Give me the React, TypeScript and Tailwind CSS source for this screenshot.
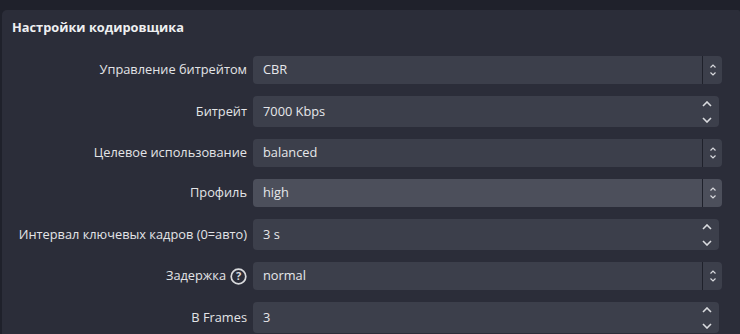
import React from "react";

const font = { fontFamily: '"Open Sans", "Noto Sans", sans-serif' };

function ComboArrows() {
  return (
    <svg width="8" height="14" viewBox="0 0 8 14" fill="none" stroke="#d8d9dd" strokeWidth="1.2">
      <path d="M1.5 4.5 L4 2 L6.5 4.5" />
      <path d="M1.5 9.5 L4 12 L6.5 9.5" />
    </svg>
  );
}

function SpinArrows() {
  return (
    <div className="flex flex-col items-center justify-between h-[22px]">
      <svg width="10" height="6" viewBox="0 0 10 6" fill="none" stroke="#dadbdf" strokeWidth="1.6">
        <path d="M1 5 L5 1 L9 5" />
      </svg>
      <svg width="10" height="6" viewBox="0 0 10 6" fill="none" stroke="#dadbdf" strokeWidth="1.6">
        <path d="M1 1 L5 5 L9 1" />
      </svg>
    </div>
  );
}

function Combo({ value, highlight }: { value: string; highlight?: boolean }) {
  return (
    <div
      className={`flex h-[28px] flex-1 rounded-[4px] ${highlight ? "bg-[#4c4f5b]" : "bg-[#3c3f4b]"}`}
    >
      <div className="flex flex-1 items-center pl-[10px] text-[12.8px] text-[#e6e7ea]">{value}</div>
      <div className="w-px bg-[#1f212b]" />
      <div className="flex w-[19px] items-center justify-center">
        <ComboArrows />
      </div>
    </div>
  );
}

function Spin({ value }: { value: string }) {
  return (
    <div className="mr-[3px] flex h-[31px] flex-1 rounded-[4px] bg-[#3c3f4b]">
      <div className="flex flex-1 items-center pl-[10px] text-[12.8px] text-[#e6e7ea]">{value}</div>
      <div className="flex w-[22px] items-center justify-center pr-[2px]">
        <SpinArrows />
      </div>
    </div>
  );
}

function Row({ label, children, help }: { label: string; children: React.ReactNode; help?: boolean }) {
  return (
    <div className="flex items-center">
      <div className="flex w-[245px] shrink-0 items-center justify-end gap-[4px] text-[12.8px] text-[#e3e4e7]">
        <span>{label}</span>
        {help && (
          <svg width="17" height="17" viewBox="0 0 17 17" fill="none">
            <circle cx="8.5" cy="8.5" r="7.3" stroke="#d9dadd" strokeWidth="1.7" />
            <text
              x="8.5"
              y="12.4"
              textAnchor="middle"
              fontSize="11"
              fontWeight="700"
              fill="#d9dadd"
              style={font}
            >
              ?
            </text>
          </svg>
        )}
      </div>
      <div className="ml-[6px] flex flex-1">{children}</div>
    </div>
  );
}

export default function App() {
  return (
    <div className="h-[334px] w-[740px] overflow-hidden bg-[#1f212b] pl-[2px] pt-[10px]" style={font}>
      <div className="h-full rounded-tl-[5px] rounded-tr-[2px] bg-[#2b2d39] pr-[18px]">
        <div className="flex h-[34px] items-center pl-[10px] pt-[1px] text-[12.8px] font-bold text-[#eeeff1]">
          Настройки кодировщика
        </div>
        <div className="mt-[12px] flex flex-col gap-[12px]">
          <Row label="Управление битрейтом">
            <Combo value="CBR" />
          </Row>
          <Row label="Битрейт">
            <Spin value="7000 Kbps" />
          </Row>
          <Row label="Целевое использование">
            <Combo value="balanced" />
          </Row>
          <Row label="Профиль">
            <Combo value="high" highlight />
          </Row>
          <Row label="Интервал ключевых кадров (0=авто)">
            <Spin value="3 s" />
          </Row>
          <Row label="Задержка" help>
            <Combo value="normal" />
          </Row>
          <Row label="B Frames">
            <Spin value="3" />
          </Row>
        </div>
      </div>
    </div>
  );
}
